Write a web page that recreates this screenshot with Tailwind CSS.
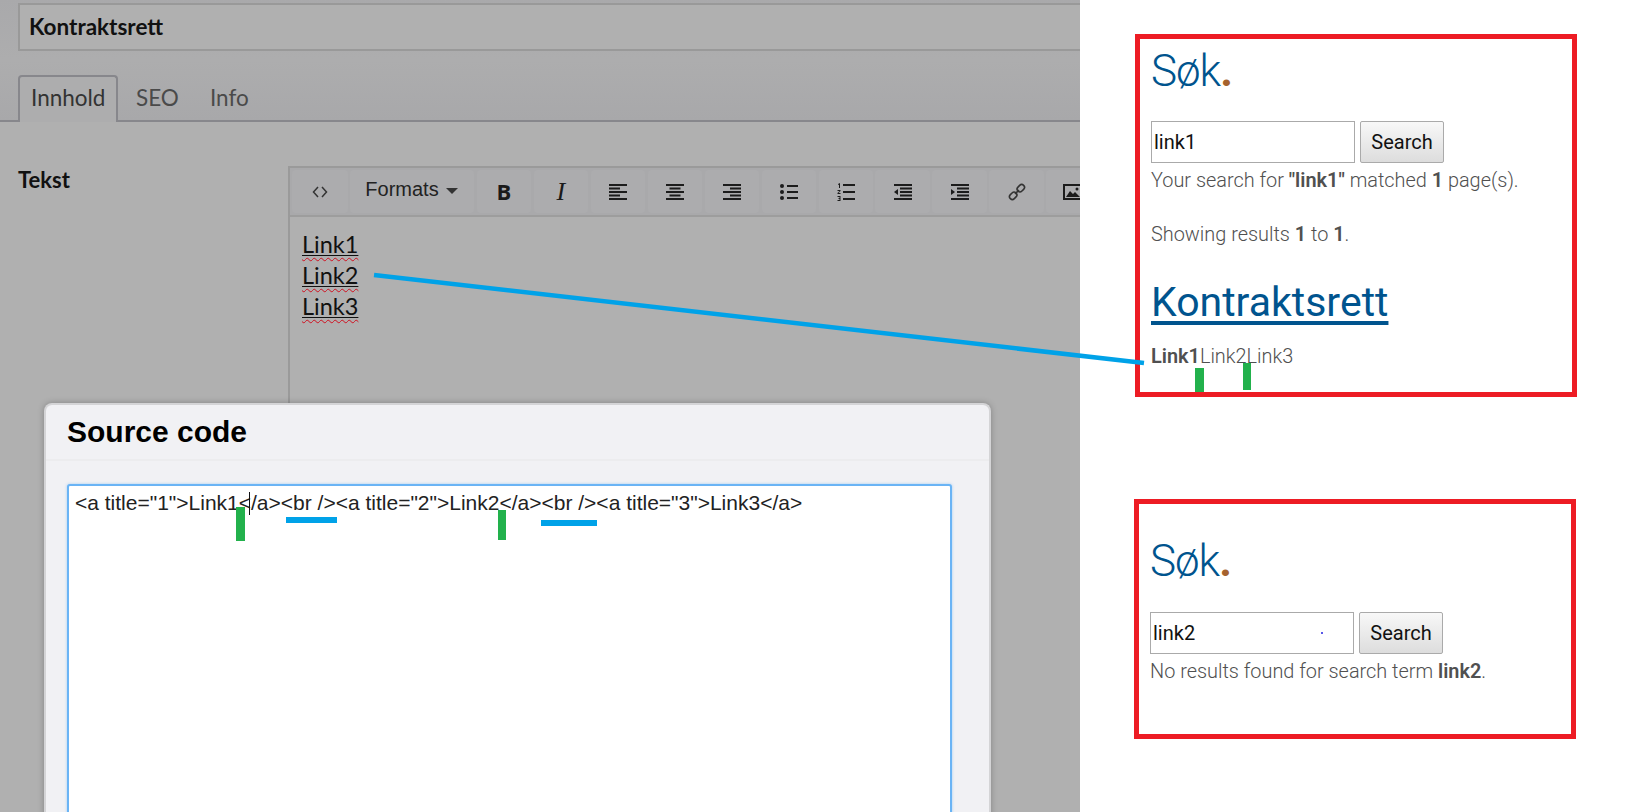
<!DOCTYPE html>
<html lang="no">
<head>
    <meta charset="UTF-8">
    <title>Kontraktsrett</title>
    <script src="https://cdn.jsdelivr.net/npm/@tailwindcss/browser@4"></script>
</head>
<body class="bg-white">
<div class="relative flex w-[1635px] h-[812px] overflow-hidden bg-white">

    <!-- CMS editor, dimmed behind the modal -->
    <div class="relative w-[1080px] h-full shrink-0 overflow-hidden bg-[#b0b0b0] font-['Lato',sans-serif]">
        <div class="h-[122px] pt-[3px] pl-[18px] bg-gradient-to-b from-[#a9a9ab] via-[#adadae] to-[#a8a8aa] border-b-2 border-[#87878c]">
            <div class="h-[48px] w-[1100px] border-2 border-[#999] bg-[#b0b0b0] pl-[9px] pb-[1px] flex items-center text-[22.500px] font-bold text-[#111]">Kontraktsrett</div>
            <div class="flex mt-[24px] text-[22.500px] leading-[42px] text-[#4a4a4a]">
                <div class="w-[100px] h-[47px] border-2 border-b-0 border-[#87878c] rounded-t-[4px] bg-[#adadae] pl-[11px] text-[#333]">Innhold</div>
                <div class="ml-[18px] mt-[2px]">SEO</div>
                <div class="ml-[31px] mt-[2px]">Info</div>
            </div>
        </div>

        <div class="flex mt-[44px] pl-[18px]">
            <div class="w-[270px] shrink-0 text-[22px] leading-[28px] font-bold text-[#111]">Tekst</div>
            <div class="w-[900px] h-[300px] shrink-0 border-l-2 border-t-2 border-[#9a9a9a]">
                <div class="h-[49px] flex gap-[2.3px] pl-[2px] pt-[2px] border-b-2 border-[#9d9d9d] bg-[#a9a9ab] text-[#1a1a1a]">
                    <div class="w-[56px] h-[43px] rounded-[4px] bg-[#acacae] flex items-center justify-center">
                        <svg width="16" height="12" viewBox="0 0 16 12" fill="none" stroke="#333" stroke-width="1.5"><path d="M6 1 1.5 6 6 11M10 1l4.500 5L10 11"/></svg>
                    </div>
                    <div class="w-[124px] h-[43px] rounded-[4px] bg-[#acacae] flex items-start pl-[15px] pt-[5px] text-[20px] leading-[28px] font-['Liberation_Sans',sans-serif] text-[#222]">Formats<span class="ml-[7px] mt-[13px] w-0 h-0 border-x-[6px] border-x-transparent border-t-[6px] border-t-[#333]"></span></div>
                    <div class="w-[54.700px] h-[43px] rounded-[4px] bg-[#acacae] flex items-center justify-center text-[22px] font-bold font-['Open_Sans',sans-serif]">B</div>
                    <div class="w-[54.700px] h-[43px] rounded-[4px] bg-[#acacae] flex items-center justify-center text-[26px] italic font-['Liberation_Serif',serif]">I</div>
                    <div class="w-[54.700px] h-[43px] rounded-[4px] bg-[#acacae] flex items-center justify-center">
                        <svg width="18" height="16" viewBox="0 0 18 16" fill="#1c1c1c"><rect width="18" height="2"/><rect y="3.500" width="11" height="2"/><rect y="7" width="18" height="2"/><rect y="10.500" width="11" height="2"/><rect y="14" width="18" height="2"/></svg>
                    </div>
                    <div class="w-[54.700px] h-[43px] rounded-[4px] bg-[#acacae] flex items-center justify-center">
                        <svg width="18" height="16" viewBox="0 0 18 16" fill="#1c1c1c"><rect width="18" height="2"/><rect x="3.500" y="3.500" width="11" height="2"/><rect y="7" width="18" height="2"/><rect x="3.500" y="10.500" width="11" height="2"/><rect y="14" width="18" height="2"/></svg>
                    </div>
                    <div class="w-[54.700px] h-[43px] rounded-[4px] bg-[#acacae] flex items-center justify-center">
                        <svg width="18" height="16" viewBox="0 0 18 16" fill="#1c1c1c"><rect width="18" height="2"/><rect x="7" y="3.500" width="11" height="2"/><rect y="7" width="18" height="2"/><rect x="7" y="10.500" width="11" height="2"/><rect y="14" width="18" height="2"/></svg>
                    </div>
                    <div class="w-[54.700px] h-[43px] rounded-[4px] bg-[#acacae] flex items-center justify-center">
                        <svg width="18" height="16" viewBox="0 0 18 16" fill="#1c1c1c"><circle cx="2" cy="2" r="2"/><circle cx="2" cy="8" r="2"/><circle cx="2" cy="14" r="2"/><rect x="7" y="1" width="11" height="2"/><rect x="7" y="7" width="11" height="2"/><rect x="7" y="13" width="11" height="2"/></svg>
                    </div>
                    <div class="w-[54.700px] h-[43px] rounded-[4px] bg-[#acacae] flex items-center justify-center">
                        <svg width="18" height="18" viewBox="0 0 18 18" fill="#1c1c1c"><rect x="6" y="1" width="12" height="2"/><rect x="6" y="8" width="12" height="2"/><rect x="6" y="15" width="12" height="2"/><path d="M1 1l2-1v5H2V1.500L1 2zM0.500 7h3v1L1.500 10h2v1h-3v-1l2-2h-2zM0.500 13h3v5h-3v-1h2v-1h-1v-1h1v-1h-2z"/></svg>
                    </div>
                    <div class="w-[54.700px] h-[43px] rounded-[4px] bg-[#acacae] flex items-center justify-center">
                        <svg width="18" height="16" viewBox="0 0 18 16" fill="#1c1c1c"><rect width="18" height="2"/><rect x="6" y="3.500" width="12" height="2"/><rect x="6" y="7" width="12" height="2"/><rect x="6" y="10.500" width="12" height="2"/><rect y="14" width="18" height="2"/><path d="M4 5v6L0 8z"/></svg>
                    </div>
                    <div class="w-[54.700px] h-[43px] rounded-[4px] bg-[#acacae] flex items-center justify-center">
                        <svg width="18" height="16" viewBox="0 0 18 16" fill="#1c1c1c"><rect width="18" height="2"/><rect x="6" y="3.500" width="12" height="2"/><rect x="6" y="7" width="12" height="2"/><rect x="6" y="10.500" width="12" height="2"/><rect y="14" width="18" height="2"/><path d="M0 5v6l4-3z"/></svg>
                    </div>
                    <div class="w-[54.700px] h-[43px] rounded-[4px] bg-[#acacae] flex items-center justify-center">
                        <svg width="18" height="18" viewBox="0 0 18 18" fill="none" stroke="#333" stroke-width="1.600"><rect x="-4" y="-2.800" width="8" height="5.600" rx="2.800" transform="translate(5.200 12.800) rotate(-45)"/><rect x="-4" y="-2.800" width="8" height="5.600" rx="2.800" transform="translate(12.800 5.200) rotate(-45)"/><path d="M7 11l4-4"/></svg>
                    </div>
                    <div class="w-[54.700px] h-[43px] rounded-[4px] bg-[#acacae] flex items-center pl-[17px]">
                        <svg width="20" height="16" viewBox="0 0 20 16" class="shrink-0" fill="#1c1c1c"><path d="M0 0h20v16H0zM2 2v12h16V2z" fill-rule="evenodd"/><path d="M3 13l4-6 3 3 2-2 5 5z"/><circle cx="14" cy="5" r="1.500"/></svg>
                    </div>
                </div>
                <div class="pl-[12px] pt-[12px] text-[23.500px] leading-[31px] text-[#111]">
                    <div><span class="underline decoration-wavy decoration-[#d01020] decoration-[1px] underline-offset-[4px]"><span class="underline decoration-[#111] decoration-[1px] underline-offset-[2px]">Link1</span></span></div>
                    <div><span class="underline decoration-wavy decoration-[#d01020] decoration-[1px] underline-offset-[4px]"><span class="underline decoration-[#111] decoration-[1px] underline-offset-[2px]">Link2</span></span></div>
                    <div><span class="underline decoration-wavy decoration-[#d01020] decoration-[1px] underline-offset-[4px]"><span class="underline decoration-[#111] decoration-[1px] underline-offset-[2px]">Link3</span></span></div>
                </div>
            </div>
        </div>

        <!-- Source code modal -->
        <div class="absolute left-[44px] top-[403px] w-[947px] h-[420px] bg-[#f1f1f4] border-2 border-b-0 border-[#d4d4d6] rounded-t-[8px] shadow-[0_0_6px_rgba(0,0,0,0.25)]">
            <div class="h-[56px] pl-[21px] pt-[9px] border-b-2 border-[#ececee] text-[30px] leading-[36px] font-bold text-black font-['Liberation_Sans',sans-serif]">Source code</div>
            <div class="relative ml-[21px] mt-[23px] w-[885px] h-[400px] bg-white border-2 border-[#6ab4f5] rounded-[3px] shadow-[0_0_3px_rgba(106,180,245,0.6)] pl-[6px] pt-[4px] text-[21px] leading-[26px] text-[#222] font-['Liberation_Sans',sans-serif] whitespace-nowrap">&lt;a title="1"&gt;Link1&lt;/a&gt;&lt;br /&gt;&lt;a title="2"&gt;Link2&lt;/a&gt;&lt;br /&gt;&lt;a title="3"&gt;Link3&lt;/a&gt;</div>
        </div>
    </div>

    <!-- Search results, two states -->
    <div class="flex-1 font-['Roboto',sans-serif] text-[#505050]">
        <div class="ml-[55px] mt-[34px] w-[442px] h-[363px] border-[5px] border-[#ed1c24] pl-[11px]">
            <div class="mt-[6px] text-[44px] leading-[52px] font-light text-[#00548e] tracking-[-1px]">Søk<span class="font-bold text-[#a5622e]">.</span></div>
            <div class="flex gap-[5px] mt-[24px]">
                <div class="w-[204px] h-[42px] border border-[#aaa] bg-white pl-[2px] flex items-center text-[20px] text-[#111]">link1</div>
                <div class="w-[84px] h-[42px] border border-[#aaa] rounded-[2px] bg-gradient-to-b from-[#f8f8f8] to-[#ddd] flex items-center justify-center text-[20px] text-[#111]">Search</div>
            </div>
            <p class="mt-[4px] text-[19.900px] leading-[27px] font-light whitespace-nowrap">Your search for <b class="font-semibold">"link1"</b> matched <b class="font-semibold">1</b> page(s).</p>
            <p class="mt-[27px] text-[19.900px] leading-[27px] font-light">Showing results <b class="font-semibold">1</b> to <b class="font-semibold">1</b>.</p>
            <div class="mt-[30px] text-[41px] leading-[48px] text-[#00548e] underline decoration-[4px] underline-offset-[5px]">Kontraktsrett</div>
            <p class="mt-[17px] text-[19.900px] leading-[27px] font-light"><b class="font-semibold">Link1</b>Link2Link3</p>
        </div>
        <div class="ml-[54px] mt-[102px] w-[442px] h-[240px] border-[5px] border-[#ed1c24] pl-[11px]">
            <div class="relative mt-[31px] text-[44px] leading-[52px] font-light text-[#00548e] tracking-[-1px]">Søk<span class="font-bold text-[#a5622e]">.</span></div>
            <div class="flex gap-[5px] mt-[25px]">
                <div class="relative w-[204px] h-[42px] border border-[#aaa] bg-white pl-[2px] flex items-center text-[20px] text-[#111]">link2<span class="absolute left-[170px] top-[19px] w-[2px] h-[2px] rounded-full bg-[#2020e0]"></span></div>
                <div class="w-[84px] h-[42px] border border-[#aaa] rounded-[2px] bg-gradient-to-b from-[#f8f8f8] to-[#ddd] flex items-center justify-center text-[20px] text-[#111]">Search</div>
            </div>
            <p class="mt-[4px] text-[19.900px] leading-[27px] font-light">No results found for search term <b class="font-semibold">link2</b>.</p>
        </div>
    </div>

    <!-- Hand-drawn annotations on top of the screenshot -->
    <svg class="absolute left-0 top-0 pointer-events-none" width="1635" height="812" viewBox="0 0 1635 812">
        <path d="M374 275 1144 363" stroke="#00a2e8" stroke-width="4.500" fill="none"/>
        <rect x="286" y="517" width="51" height="6" fill="#00a2e8"/>
        <rect x="541" y="520" width="56" height="6" fill="#00a2e8"/>
        <rect x="236" y="507" width="9" height="34" fill="#22b14c"/>
        <rect x="498" y="510" width="8" height="30" fill="#22b14c"/>
        <rect x="1195" y="368" width="9" height="24" fill="#22b14c"/>
        <rect x="1243" y="363" width="8" height="27" fill="#22b14c"/>
        <rect x="249" y="492" width="1" height="23" fill="#111"/>
    </svg>
</div>
</body>
</html>
